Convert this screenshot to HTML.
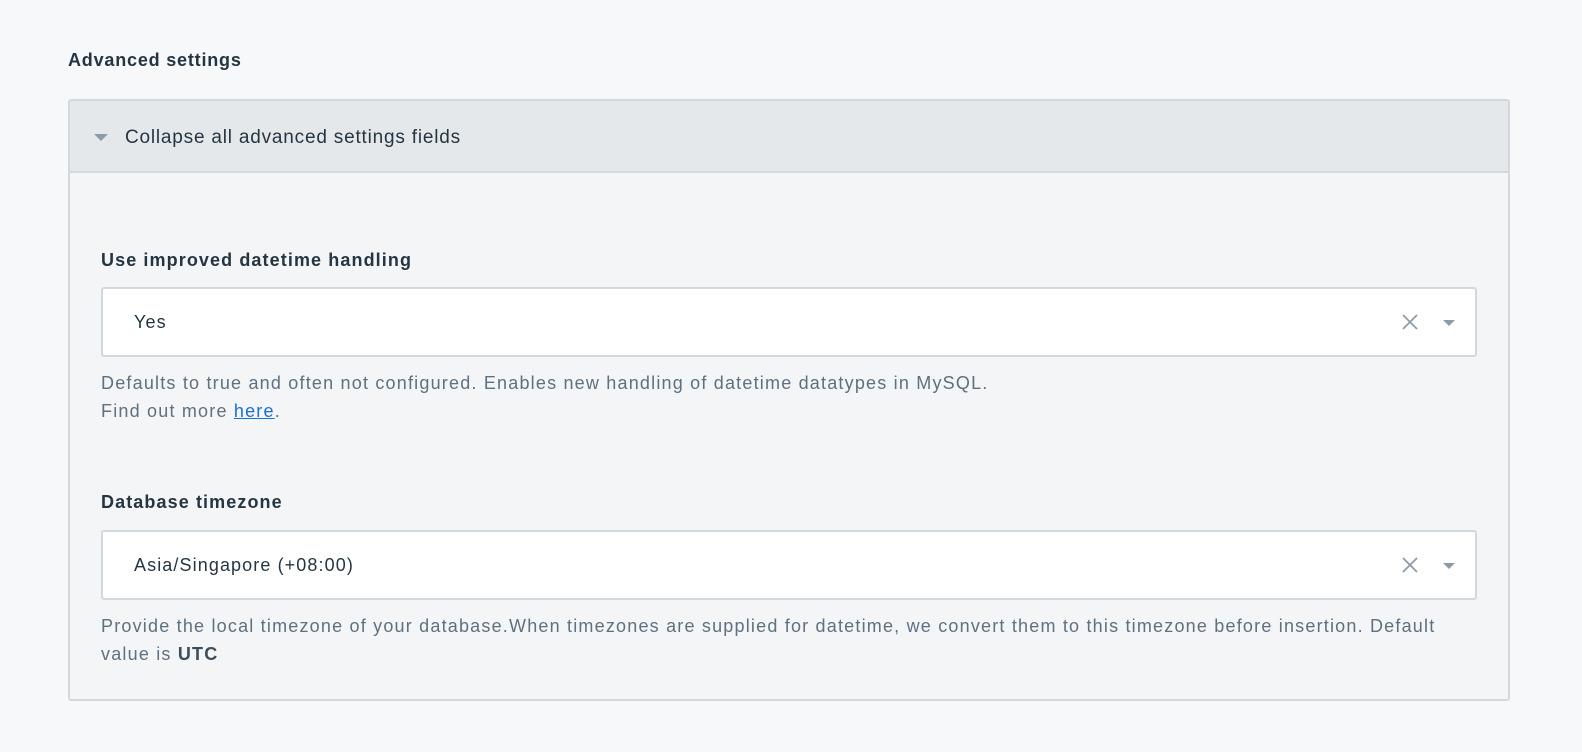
<!DOCTYPE html>
<html><head><style>
*{margin:0;padding:0;box-sizing:border-box}
body{width:1582px;height:752px;background:#f7f8fa;font-family:"Liberation Sans",sans-serif;color:#253642;position:relative;overflow:hidden}
.t{position:absolute;left:68px;top:50px;font-size:18px;font-weight:bold;letter-spacing:0.8px}
.panel{position:absolute;left:68px;top:99px;width:1442px;height:602px;border:2px solid #d3d8dc;border-radius:3px;background:#f3f5f7}
.hd{height:72px;background:#e4e8eb;border-bottom:2px solid #d3d8dc;position:relative}
.hd .tri{position:absolute;left:24px;top:33px;width:0;height:0;border-left:7px solid transparent;border-right:7px solid transparent;border-top:7px solid #8e9ba6}
.hd span{position:absolute;left:55px;top:26px;font-size:19px;letter-spacing:0.8px}
.lbl{position:absolute;left:31px;font-size:18px;font-weight:bold;letter-spacing:1.1px}
.inp{position:absolute;left:31px;width:1376px;height:70px;background:#fff;border:2px solid #d3d8dc;border-radius:3px}
.inp span{position:absolute;left:31px;top:23px;font-size:18px;letter-spacing:1.1px}
.x{position:absolute;left:1298px;top:24px}
.dd{position:absolute;left:1340px;top:31px;width:0;height:0;border-left:6px solid transparent;border-right:6px solid transparent;border-top:6px solid #8e9ba6}
.help{position:absolute;left:31px;font-size:18px;color:#5f7080;line-height:28px;letter-spacing:1.2px}
.help a{color:#1a6fd0;text-decoration:underline}
</style></head><body>
<div class="t">Advanced settings</div>
<div class="panel">
 <div class="hd"><div class="tri"></div><span>Collapse all advanced settings fields</span></div>
 <div class="lbl" style="top:149px">Use improved datetime handling</div>
 <div class="inp" style="top:186px"><span>Yes</span>
  <svg class="x" width="18" height="18" viewBox="0 0 18 18"><path d="M2 2L16 16M16 2L2 16" stroke="#8e9ba6" stroke-width="1.8"/></svg><div class="dd"></div></div>
 <div class="help" style="top:268px">Defaults to true and often not configured. Enables new handling of datetime datatypes in MySQL.<br>Find out more <a>here</a>.</div>
 <div class="lbl" style="top:391px">Database timezone</div>
 <div class="inp" style="top:429px"><span>Asia/Singapore (+08:00)</span>
  <svg class="x" width="18" height="18" viewBox="0 0 18 18"><path d="M2 2L16 16M16 2L2 16" stroke="#8e9ba6" stroke-width="1.8"/></svg><div class="dd"></div></div>
 <div class="help" style="top:511px">Provide the local timezone of your database.When timezones are supplied for datetime, we convert them to this timezone before insertion. Default<br>value is <b style="color:#3d4d59">UTC</b></div>
</div>
</body></html>
